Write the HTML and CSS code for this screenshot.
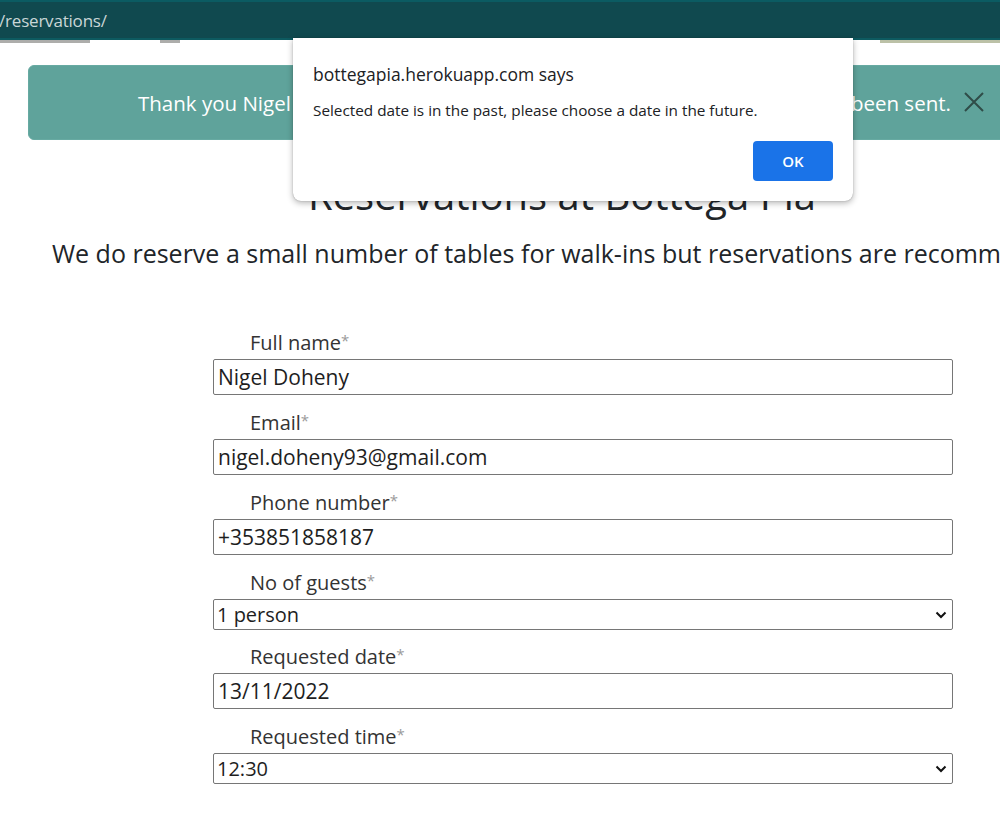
FILE: index.html
```html
<!DOCTYPE html>
<html lang="en">
<head>
<meta charset="utf-8">
<title>Reservations | Bottega Pia</title>
<link rel="stylesheet" href="styles.css">
</head>
<body>
<div class="urlbar">
  <span class="url-text">/reservations/</span>
</div>
<div class="nav-strip">
  <span class="nav-bit nav-bit-a"></span>
  <span class="nav-bit nav-bit-b"></span>
  <span class="nav-bit nav-bit-c"></span>
</div>

<div class="page">
  <div class="alert">
    <p class="alert-text">Thank you Nigel Doheny, your reservation request for 1 guest at 12:30 has been sent.</p>
    <button class="alert-close" aria-label="Close">
      <svg width="22" height="22" viewBox="0 0 22 22"><path d="M2 2 L20 20 M20 2 L2 20" stroke="#2f4c48" stroke-width="2" fill="none"/></svg>
    </button>
  </div>

  <h1 class="title">Reservations at Bottega Pia</h1>
  <p class="subtitle">We do reserve a small number of tables for walk-ins but reservations are recommended.</p>

  <form class="form">
    <div class="field">
      <label class="field-label">Full name<span class="req">*</span></label>
      <input class="control" type="text" value="Nigel Doheny">
    </div>
    <div class="field">
      <label class="field-label">Email<span class="req">*</span></label>
      <input class="control" type="text" value="nigel.doheny93@gmail.com">
    </div>
    <div class="field">
      <label class="field-label">Phone number<span class="req">*</span></label>
      <input class="control" type="text" value="+353851858187">
    </div>
    <div class="field field-select">
      <label class="field-label">No of guests<span class="req">*</span></label>
      <div class="select-wrap">
        <select class="control select"><option>1 person</option></select>
        <svg class="chev" width="12" height="8" viewBox="0 0 12 8"><path d="M1.5 1.5 L6 6 L10.5 1.5" stroke="#111" stroke-width="2" fill="none"/></svg>
      </div>
    </div>
    <div class="field">
      <label class="field-label">Requested date<span class="req">*</span></label>
      <input class="control" type="text" value="13/11/2022">
    </div>
    <div class="field field-select">
      <label class="field-label">Requested time<span class="req">*</span></label>
      <div class="select-wrap">
        <select class="control select"><option>12:30</option></select>
        <svg class="chev" width="12" height="8" viewBox="0 0 12 8"><path d="M1.5 1.5 L6 6 L10.5 1.5" stroke="#111" stroke-width="2" fill="none"/></svg>
      </div>
    </div>
  </form>
</div>

<div class="dialog" role="alertdialog">
  <p class="dialog-title">bottegapia.herokuapp.com says</p>
  <p class="dialog-msg">Selected date is in the past, please choose a date in the future.</p>
  <div class="dialog-actions">
    <button class="dialog-ok">OK</button>
  </div>
</div>
</body>
</html>
```

FILE: styles.css
```css
html, body {
  margin: 0;
  padding: 0;
  background: #ffffff;
  overflow: hidden;
}

body {
  width: 1000px;
  height: 818px;
  font-family: "Open Sans", "Noto Sans", sans-serif;
  color: #212529;
}

.urlbar {
  height: 36px;
  background: #10494f;
  border-top: 2px solid #0b5b62;
  display: flex;
  align-items: center;
}

.url-text {
  font-family: "Open Sans", "Noto Sans", sans-serif;
  font-size: 17px;
  color: #c9d6d7;
  margin-left: -1px;
  letter-spacing: -0.2px;
}

.nav-strip {
  height: 6px;
  background: linear-gradient(#0d5a60 0 2px, #ffffff 2px);
  display: flex;
}

.nav-bit {
  display: block;
  height: 3px;
  margin-top: 2px;
  background: #5b5b57;
  opacity: 0.5;
}
.nav-bit-a { width: 90px; margin-left: 0; }
.nav-bit-b { width: 20px; margin-left: 70px; }
.nav-bit-c { width: 120px; margin-left: 700px; background: #7a8450; }

.page {
  width: 1124px;
  position: relative;
}

.alert {
  position: relative;
  margin: 21px 0 0 28px;
  width: 1068px;
  height: 75px;
  box-sizing: border-box;
  background: #5fa39b;
  border: 1px solid #67aaa2;
  border-radius: 6px;
  display: flex;
  align-items: center;
  padding: 0 48px 0 109px;
}

.alert-text {
  margin: 0;
  font-size: 20.5px;
  color: #ffffff;
  white-space: nowrap;
}

.alert-close {
  position: absolute;
  left: 934px;
  top: 25px;
  width: 22px;
  height: 22px;
  padding: 0;
  border: 0;
  background: transparent;
}

.title {
  margin: 31px 0 0;
  text-align: center;
  font-size: 40px;
  font-weight: 400;
  line-height: 48px;
  color: #212529;
}

.subtitle {
  margin: 18px 0 0 52px;
  font-size: 25px;
  line-height: 32px;
  white-space: nowrap;
  color: #212529;
}

.form {
  margin: 60px 0 0 213px;
  width: 740px;
}

.field {
  margin-bottom: 14px;
}

.field-select {
  margin-bottom: 13px;
}

.field-label {
  display: block;
  padding-left: 37px;
  font-size: 20px;
  line-height: 28px;
  height: 28px;
  margin-bottom: 2px;
  color: #333333;
}

.req {
  color: #9a9a9a;
  font-size: 15px;
  line-height: 0;
  position: relative;
  top: -4px;
}

.control {
  display: block;
  width: 740px;
  height: 36px;
  box-sizing: border-box;
  margin: 0;
  border: 1px solid #767676;
  border-radius: 2px;
  background: #ffffff;
  font-family: "Open Sans", "Noto Sans", sans-serif;
  font-size: 21px;
  color: #1e1e1e;
  padding: 0 4px;
}

.select-wrap {
  position: relative;
}

.select {
  height: 31px;
  appearance: none;
  -webkit-appearance: none;
  font-size: 20px;
  padding: 0 3px;
  line-height: 29px;
}

.chev {
  position: absolute;
  right: 6px;
  top: 12px;
  pointer-events: none;
}

.dialog {
  position: absolute;
  left: 293px;
  top: 38px;
  width: 560px;
  height: 163px;
  box-sizing: border-box;
  background: #ffffff;
  border-radius: 0 0 8px 8px;
  box-shadow: 0 2px 6px rgba(0,0,0,0.3), 0 0 1px rgba(0,0,0,0.4);
  padding: 20px 20px 0 20px;
  font-family: "Open Sans", "Noto Sans", sans-serif;
  color: #202124;
}

.dialog-title {
  margin: 0;
  font-size: 17.5px;
  line-height: 32px;
}

.dialog-msg {
  margin: 10px 0 0;
  font-size: 15.3px;
  line-height: 20px;
}

.dialog-actions {
  display: flex;
  justify-content: flex-end;
  margin-top: 21px;
}

.dialog-ok {
  width: 80px;
  height: 40px;
  border: 0;
  border-radius: 4px;
  background: #1a73e8;
  color: #ffffff;
  font-family: "Open Sans", "Noto Sans", sans-serif;
  font-size: 15px;
  font-weight: 600;
}
```
